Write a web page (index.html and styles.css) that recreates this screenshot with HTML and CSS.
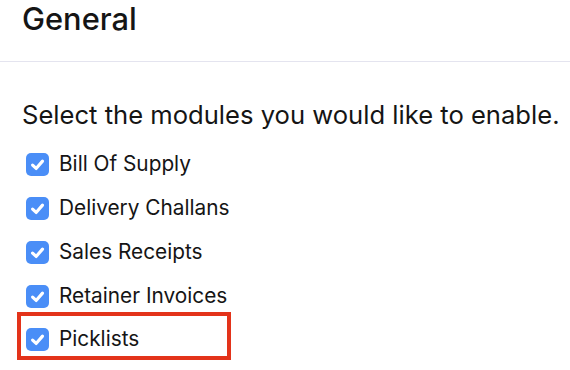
FILE: index.html
```html
<!DOCTYPE html>
<html>
<head>
    <title>General</title>
    <link rel="stylesheet" href="styles.css">
</head>
<body>
    <div class="page-header">
        <h1>General</h1>
    </div>

    <div class="content">
        <p class="intro">Select the modules you would like to enable.</p>

        <ul class="module-list">
            <li class="module-row">
                <span class="checkbox"><svg viewBox="0 0 22 22"><path d="M6.3 11.6 L9.7 14.8 L15.8 7.8" /></svg></span>
                <span class="module-label">Bill Of Supply</span>
            </li>
            <li class="module-row">
                <span class="checkbox"><svg viewBox="0 0 22 22"><path d="M6.3 11.6 L9.7 14.8 L15.8 7.8" /></svg></span>
                <span class="module-label">Delivery Challans</span>
            </li>
            <li class="module-row">
                <span class="checkbox"><svg viewBox="0 0 22 22"><path d="M6.3 11.6 L9.7 14.8 L15.8 7.8" /></svg></span>
                <span class="module-label">Sales Receipts</span>
            </li>
            <li class="module-row">
                <span class="checkbox"><svg viewBox="0 0 22 22"><path d="M6.3 11.6 L9.7 14.8 L15.8 7.8" /></svg></span>
                <span class="module-label">Retainer Invoices</span>
            </li>
            <li class="module-row highlight">
                <span class="checkbox"><svg viewBox="0 0 22 22"><path d="M6.3 11.6 L9.7 14.8 L15.8 7.8" /></svg></span>
                <span class="module-label">Picklists</span>
            </li>
        </ul>
    </div>
</body>
</html>
```

FILE: styles.css
```css
* {
    margin: 0;
    padding: 0;
    box-sizing: border-box;
}

body {
    background: #fff;
    color: #151515;
    font-family: 'Inter', 'Noto Sans', sans-serif;
    overflow: hidden;
}

.page-header {
    height: 62px;
    padding: 0 22px;
    border-bottom: 1px solid #e4e4ef;
}

.page-header h1 {
    font-size: 30.8px;
    font-weight: 500;
    line-height: 38px;
}

.content {
    padding: 0 22px;
}

.intro {
    margin-top: 38px;
    font-size: 25.6px;
    line-height: 30px;
    white-space: nowrap;
}

.module-list {
    list-style: none;
    margin-top: 11px;
}

.module-row {
    display: flex;
    align-items: center;
    gap: 10px;
    height: 44px;
    padding-left: 4px;
}

.checkbox {
    width: 23px;
    height: 23px;
    border-radius: 5px;
    background: #4a8ef7;
    display: flex;
    margin-top: 2px;
}

.checkbox svg {
    width: 23px;
    height: 23px;
    fill: none;
    stroke: #fff;
    stroke-width: 3;
    stroke-linecap: round;
    stroke-linejoin: round;
}

.module-label {
    font-size: 20.8px;
    white-space: nowrap;
}

.module-row.highlight {
    width: 214px;
    height: 48px;
    margin-top: -5px;
    margin-left: -5px;
    padding-left: 5px;
    padding-top: 5px;
    border: 4px solid #e3331a;
}
```
